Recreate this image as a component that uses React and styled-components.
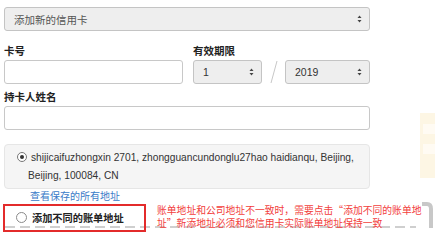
import React from "react";
import styled, { createGlobalStyle } from "styled-components";

const Global = createGlobalStyle`
  html, body { margin: 0; padding: 0; background: #fff; }
  body { font-family: "Liberation Sans", "Noto Sans CJK SC", sans-serif; color: #333; }
  * { box-sizing: border-box; }
`;

const Page = styled.div`
  position: relative;
  width: 435px;
  height: 246px;
  overflow: hidden;
  padding: 7px 0 0 4px;
`;

const Form = styled.div`
  width: 366px;
  display: flex;
  flex-direction: column;
`;

const SelectBox = styled.div`
  height: 24px;
  width: ${(p) => p.$w || "100%"};
  background: #eeeeee;
  border: 1px solid #c4c4c4;
  border-radius: 3px;
  display: flex;
  align-items: center;
  justify-content: space-between;
  padding: 0 7px 0 ${(p) => p.$pl || 8}px;
  font-size: 10.5px;
  color: ${(p) => (p.$muted ? "#555" : "#333")};
  flex: none;
`;

const Arrows = () => (
  <svg width="5" height="8" viewBox="0 0 5 8">
    <path d="M2.5 0.5 L4.5 3 L0.5 3 Z" fill="#444" />
    <path d="M2.5 7.5 L4.5 5 L0.5 5 Z" fill="#444" />
  </svg>
);

const Row = styled.div`
  display: grid;
  grid-template-columns: 179px 177px;
  column-gap: 10px;
  margin-top: 14px;
`;

const Field = styled.div`
  display: flex;
  flex-direction: column;
  margin-top: ${(p) => p.$mt || 0}px;
`;

const Label = styled.div`
  font-family: "Noto Sans CJK SC", "Liberation Sans", sans-serif;
  font-weight: 700;
  font-size: 10.5px;
  line-height: 12px;
  color: #222;
  margin-bottom: 3px;
`;

const Input = styled.div`
  height: 24px;
  width: 100%;
  background: #fff;
  border: 1px solid #c8c8c8;
  border-radius: 3px;
`;

const Expiry = styled.div`
  display: flex;
  align-items: center;
`;

const Slash = styled.div`
  width: 23px;
  height: 24px;
  display: flex;
  align-items: center;
  justify-content: center;
`;

const AddressBox = styled.div`
  margin-top: 14px;
  background: #f5f5f5;
  border: 1px solid #e6e6e6;
  border-radius: 4px;
  padding: 4px 6px 6px 23px;
  font-size: 10.2px;
  line-height: 18px;
  color: #333;
  height: 45px;
`;

const RadioDot = styled.span`
  display: inline-block;
  vertical-align: -1px;
  width: 10px;
  height: 10px;
  border-radius: 50%;
  border: 1px solid #777;
  background: #fff;
  margin-left: -11px;
  margin-right: 4px;
  position: relative;
  &::after {
    content: "";
    position: absolute;
    left: 2px;
    top: 2px;
    width: 4px;
    height: 4px;
    border-radius: 50%;
    background: #333;
  }
`;

const Link = styled.a`
  font-family: "Noto Sans CJK SC", sans-serif;
  font-size: 10px;
  line-height: 12px;
  color: #3a7bc8;
  margin: 1px 0 0 26px;
  text-decoration: none;
`;

const BillingRow = styled.div`
  width: 411px;
  margin: 4px 0 0 1px;
  height: 22px;
  display: flex;
  align-items: center;
  padding: 2px 0 2px 11px;
  position: relative;
  &::after {
    content: "";
    position: absolute;
    left: 0;
    right: 0;
    bottom: 0;
    height: 2px;
    background: repeating-linear-gradient(90deg, #cfcfcf 0 10px, transparent 10px 15px);
  }
`;

const EmptyRadio = styled.span`
  width: 11px;
  height: 11px;
  border-radius: 50%;
  border: 1px solid #8a8a8a;
  background: #fff;
  margin-right: 5px;
  flex: none;
`;

const BoldText = styled.span`
  font-family: "Noto Sans CJK SC", sans-serif;
  font-weight: 700;
  font-size: 10.2px;
  color: #222;
`;

const RedFrame = styled.div`
  position: absolute;
  left: 3px;
  top: 204px;
  width: 143px;
  height: 28px;
  border: 2px solid #e32b2b;
`;

const RedNote = styled.div`
  position: absolute;
  left: 157px;
  top: 204px;
  font-family: "Noto Sans CJK SC", sans-serif;
  font-size: 9.8px;
  line-height: 13px;
  color: #f2403c;
  white-space: nowrap;
`;

const Deco = styled.svg`
  position: absolute;
  left: 418px;
  top: 100px;
`;

export default function App() {
  return (
    <>
      <Global />
      <Page>
        <Form>
          <SelectBox $muted $pl={9}>
            <span>添加新的信用卡</span>
            <Arrows />
          </SelectBox>
          <Row>
            <Field>
              <Label>卡号</Label>
              <Input />
            </Field>
            <Field>
              <Label>有效期限</Label>
              <Expiry>
                <SelectBox $w="69px" $pl={9}>
                  <span>1</span>
                  <Arrows />
                </SelectBox>
                <Slash>
                  <svg width="10" height="24" viewBox="0 0 10 24">
                    <line x1="8" y1="1" x2="2" y2="23" stroke="#c8c8c8" strokeWidth="1" />
                  </svg>
                </Slash>
                <SelectBox $w="85px" $pl={9}>
                  <span>2019</span>
                  <Arrows />
                </SelectBox>
              </Expiry>
            </Field>
          </Row>
          <Field $mt={7}>
            <Label>持卡人姓名</Label>
            <Input />
          </Field>
          <AddressBox>
            <RadioDot />
            shijicaifuzhongxin 2701, zhongguancundonglu27hao haidianqu, Beijing,
            Beijing, 100084, CN
          </AddressBox>
          <Link href="#">查看保存的所有地址</Link>
          <BillingRow>
            <EmptyRadio />
            <BoldText>添加不同的账单地址</BoldText>
          </BillingRow>
        </Form>
        <RedFrame />
        <RedNote>
          账单地址和公司地址不一致时，需要点击“添加不同的账单地
          <br />
          址”新添地址必须和您信用卡实际账单地址保持一致
        </RedNote>
        <Deco width="17" height="140" viewBox="0 0 17 140">
          <path d="M2 13 H17 V78 H2 Z" fill="#fdf6e4" />
          <path d="M5 24 H17 V34 H5 Z" fill="#fffbf3" />
          <path d="M5 44 H17 V54 H5 Z" fill="#fffbf3" />
          <path d="M4 104 H9 Q13 104 13 109 V128" fill="none" stroke="#c8c8c8" strokeWidth="4" />
        </Deco>
      </Page>
    </>
  );
}
